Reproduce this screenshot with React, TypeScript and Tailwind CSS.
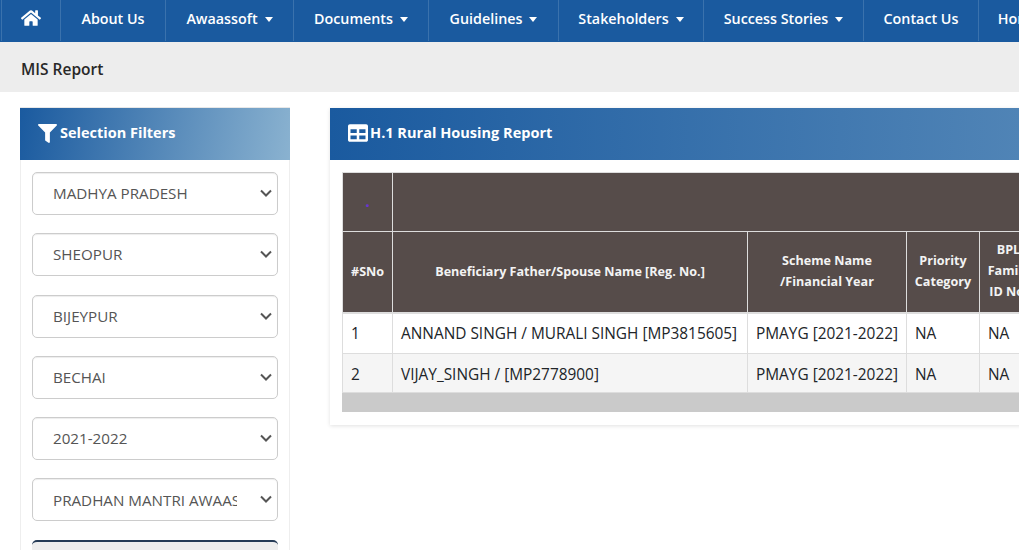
import { FaFilter, FaHome, FaTable } from 'react-icons/fa'

const navItems = [
  { label: 'About Us', width: 'w-[105px]' },
  { label: 'Awaassoft', caret: true, width: 'w-[128px]' },
  { label: 'Documents', caret: true, width: 'w-[135px]' },
  { label: 'Guidelines', caret: true, width: 'w-[130px]' },
  { label: 'Stakeholders', caret: true, width: 'w-[145px]' },
  { label: 'Success Stories', caret: true, width: 'w-[160px]' },
  { label: 'Contact Us', width: 'w-[115px]' },
  { label: 'Home', width: 'w-[80px]' },
]

const filters = ['MADHYA PRADESH', 'SHEOPUR', 'BIJEYPUR', 'BECHAI', '2021-2022', 'PRADHAN MANTRI AWAAS YOJANA GRAMIN']

const rows = [
  { sno: 1, name: 'ANNAND SINGH / MURALI SINGH [MP3815605]', scheme: 'PMAYG [2021-2022]', rowClass: 'bg-white h-[41px]', cellClass: '' },
  { sno: 2, name: 'VIJAY_SINGH / [MP2778900]', scheme: 'PMAYG [2021-2022]', rowClass: 'bg-[#f5f5f5] h-[39px]', cellClass: 'pt-[3px]' },
]

const thClass = 'border border-[#dddddd] bg-[#564c4a] px-2 text-center align-middle text-[12.6px] font-bold leading-[21px] text-[#f3f3f3]'
const tdClass = 'border border-[#dddddd] px-2 align-middle text-[15.4px] whitespace-nowrap text-[#212529]'

export default function App() {
  return (
    <div className="h-[550px] w-[1019px] overflow-hidden bg-white font-['Open_Sans',sans-serif]">
      {/* Top menu */}
      <nav className="flex h-[42px] bg-[#1a5a9f] pb-px pl-px text-[14.3px] font-semibold text-white">
        <a className="flex w-[60px] shrink-0 items-center justify-center border-x border-[#3a72ad] pb-1.5 text-[20px]">
          <FaHome />
        </a>
        {navItems.map(item => (
          <a key={item.label} className={`flex shrink-0 items-center justify-center gap-[7px] border-r border-[#3a72ad] pb-1 ${item.width}`}>
            {item.label}
            {item.caret && <span className="mt-0.5 border-x-[4.5px] border-t-[5px] border-x-transparent border-t-white" />}
          </a>
        ))}
      </nav>

      {/* Breadcrumb bar */}
      <div className="flex h-[50px] items-center bg-[#ededed] px-[21px] pt-[5px] text-[15.5px] font-semibold text-[#282828]">
        MIS Report
      </div>

      <div className="flex items-start gap-10 px-5 pt-4">
        {/* Filters */}
        <aside className="w-[270px] shrink-0">
          <div className="flex h-[52px] items-center bg-[linear-gradient(100deg,#1a5a9f,#8ab2d0)] pb-[2px] pl-[18px] text-[14.5px] font-bold text-white shadow-[0_-1px_0_#e8e8e8]">
            <FaFilter className="mr-[3px] text-[19px]" />
            Selection Filters
          </div>
          <div className="flex flex-col gap-[18.3px] border-x border-[#eeeeee] px-[11px] pt-3">
            {filters.map(f => (
              <div key={f} className="relative">
                <select defaultValue={f} className="h-[43px] w-[246px] appearance-none rounded-[5px] border border-[#cccccc] bg-white pl-5 pr-[40px] text-[15.2px] text-[#555555] shadow-[inset_0_1px_1px_rgba(0,0,0,0.075)]">
                  <option>{f}</option>
                </select>
                <svg className="pointer-events-none absolute right-[6px] top-[17px] h-[9px] w-[12px]" viewBox="0 0 12 9" fill="none" stroke="#555555" strokeWidth="2">
                  <path d="M1 1.5l5 5 5-5" />
                </svg>
              </div>
            ))}
            <div className="h-10 rounded-t-[5px] border-t-2 border-[#263c57] bg-[#eeeeee]" />
          </div>
        </aside>

        {/* Report */}
        <section className="w-[1380px] shrink-0 shadow-[0_1px_4px_rgba(0,0,0,0.12)]">
          <div className="flex h-[52px] items-center gap-[2px] bg-[linear-gradient(91deg,#1a5a9f,#86aecd)] pb-[2px] pl-[18px] text-[14.55px] font-bold text-white">
            <FaTable className="text-[20px]" />
            H.1 Rural Housing Report
          </div>
          <div className="px-3 pb-[13px] pt-3">
            <table className="w-[1000px] table-fixed border-collapse">
              <colgroup>
                <col className="w-[50px]" />
                <col className="w-[355px]" />
                <col className="w-[159px]" />
                <col className="w-[73px]" />
                <col className="w-[58px]" />
                <col />
              </colgroup>
              <thead>
                <tr className="h-[59px]">
                  <th className={thClass}>
                    <span className="text-[16px] leading-none text-[#6a35d0]">.</span>
                  </th>
                  <th className={thClass} colSpan={5} />
                </tr>
                <tr className="h-[81px] border-b-2 border-[#dddddd]">
                  <th className={thClass}>#SNo</th>
                  <th className={thClass}>Beneficiary Father/Spouse Name [Reg. No.]</th>
                  <th className={`${thClass} pb-[2px]`}>Scheme Name<br />/Financial Year</th>
                  <th className={`${thClass} !px-0 pb-[2px]`}>Priority<br />Category</th>
                  <th className={`${thClass} !px-0 pb-[2px]`}>BPL<br />Family<br />ID No.</th>
                  <th className={thClass} />
                </tr>
              </thead>
              <tbody>
                {rows.map(r => (
                  <tr key={r.sno} className={r.rowClass}>
                    <td className={`${tdClass} ${r.cellClass}`}>{r.sno}</td>
                    <td className={`${tdClass} ${r.cellClass}`}>{r.name}</td>
                    <td className={`${tdClass} ${r.cellClass}`}>{r.scheme}</td>
                    <td className={`${tdClass} ${r.cellClass}`}>NA</td>
                    <td className={`${tdClass} ${r.cellClass}`}>NA</td>
                    <td className={`${tdClass} ${r.cellClass}`} />
                  </tr>
                ))}
              </tbody>
            </table>
            <div className="h-[19px] w-[1000px] bg-[#cacaca]" />
          </div>
        </section>
      </div>
    </div>
  )
}
